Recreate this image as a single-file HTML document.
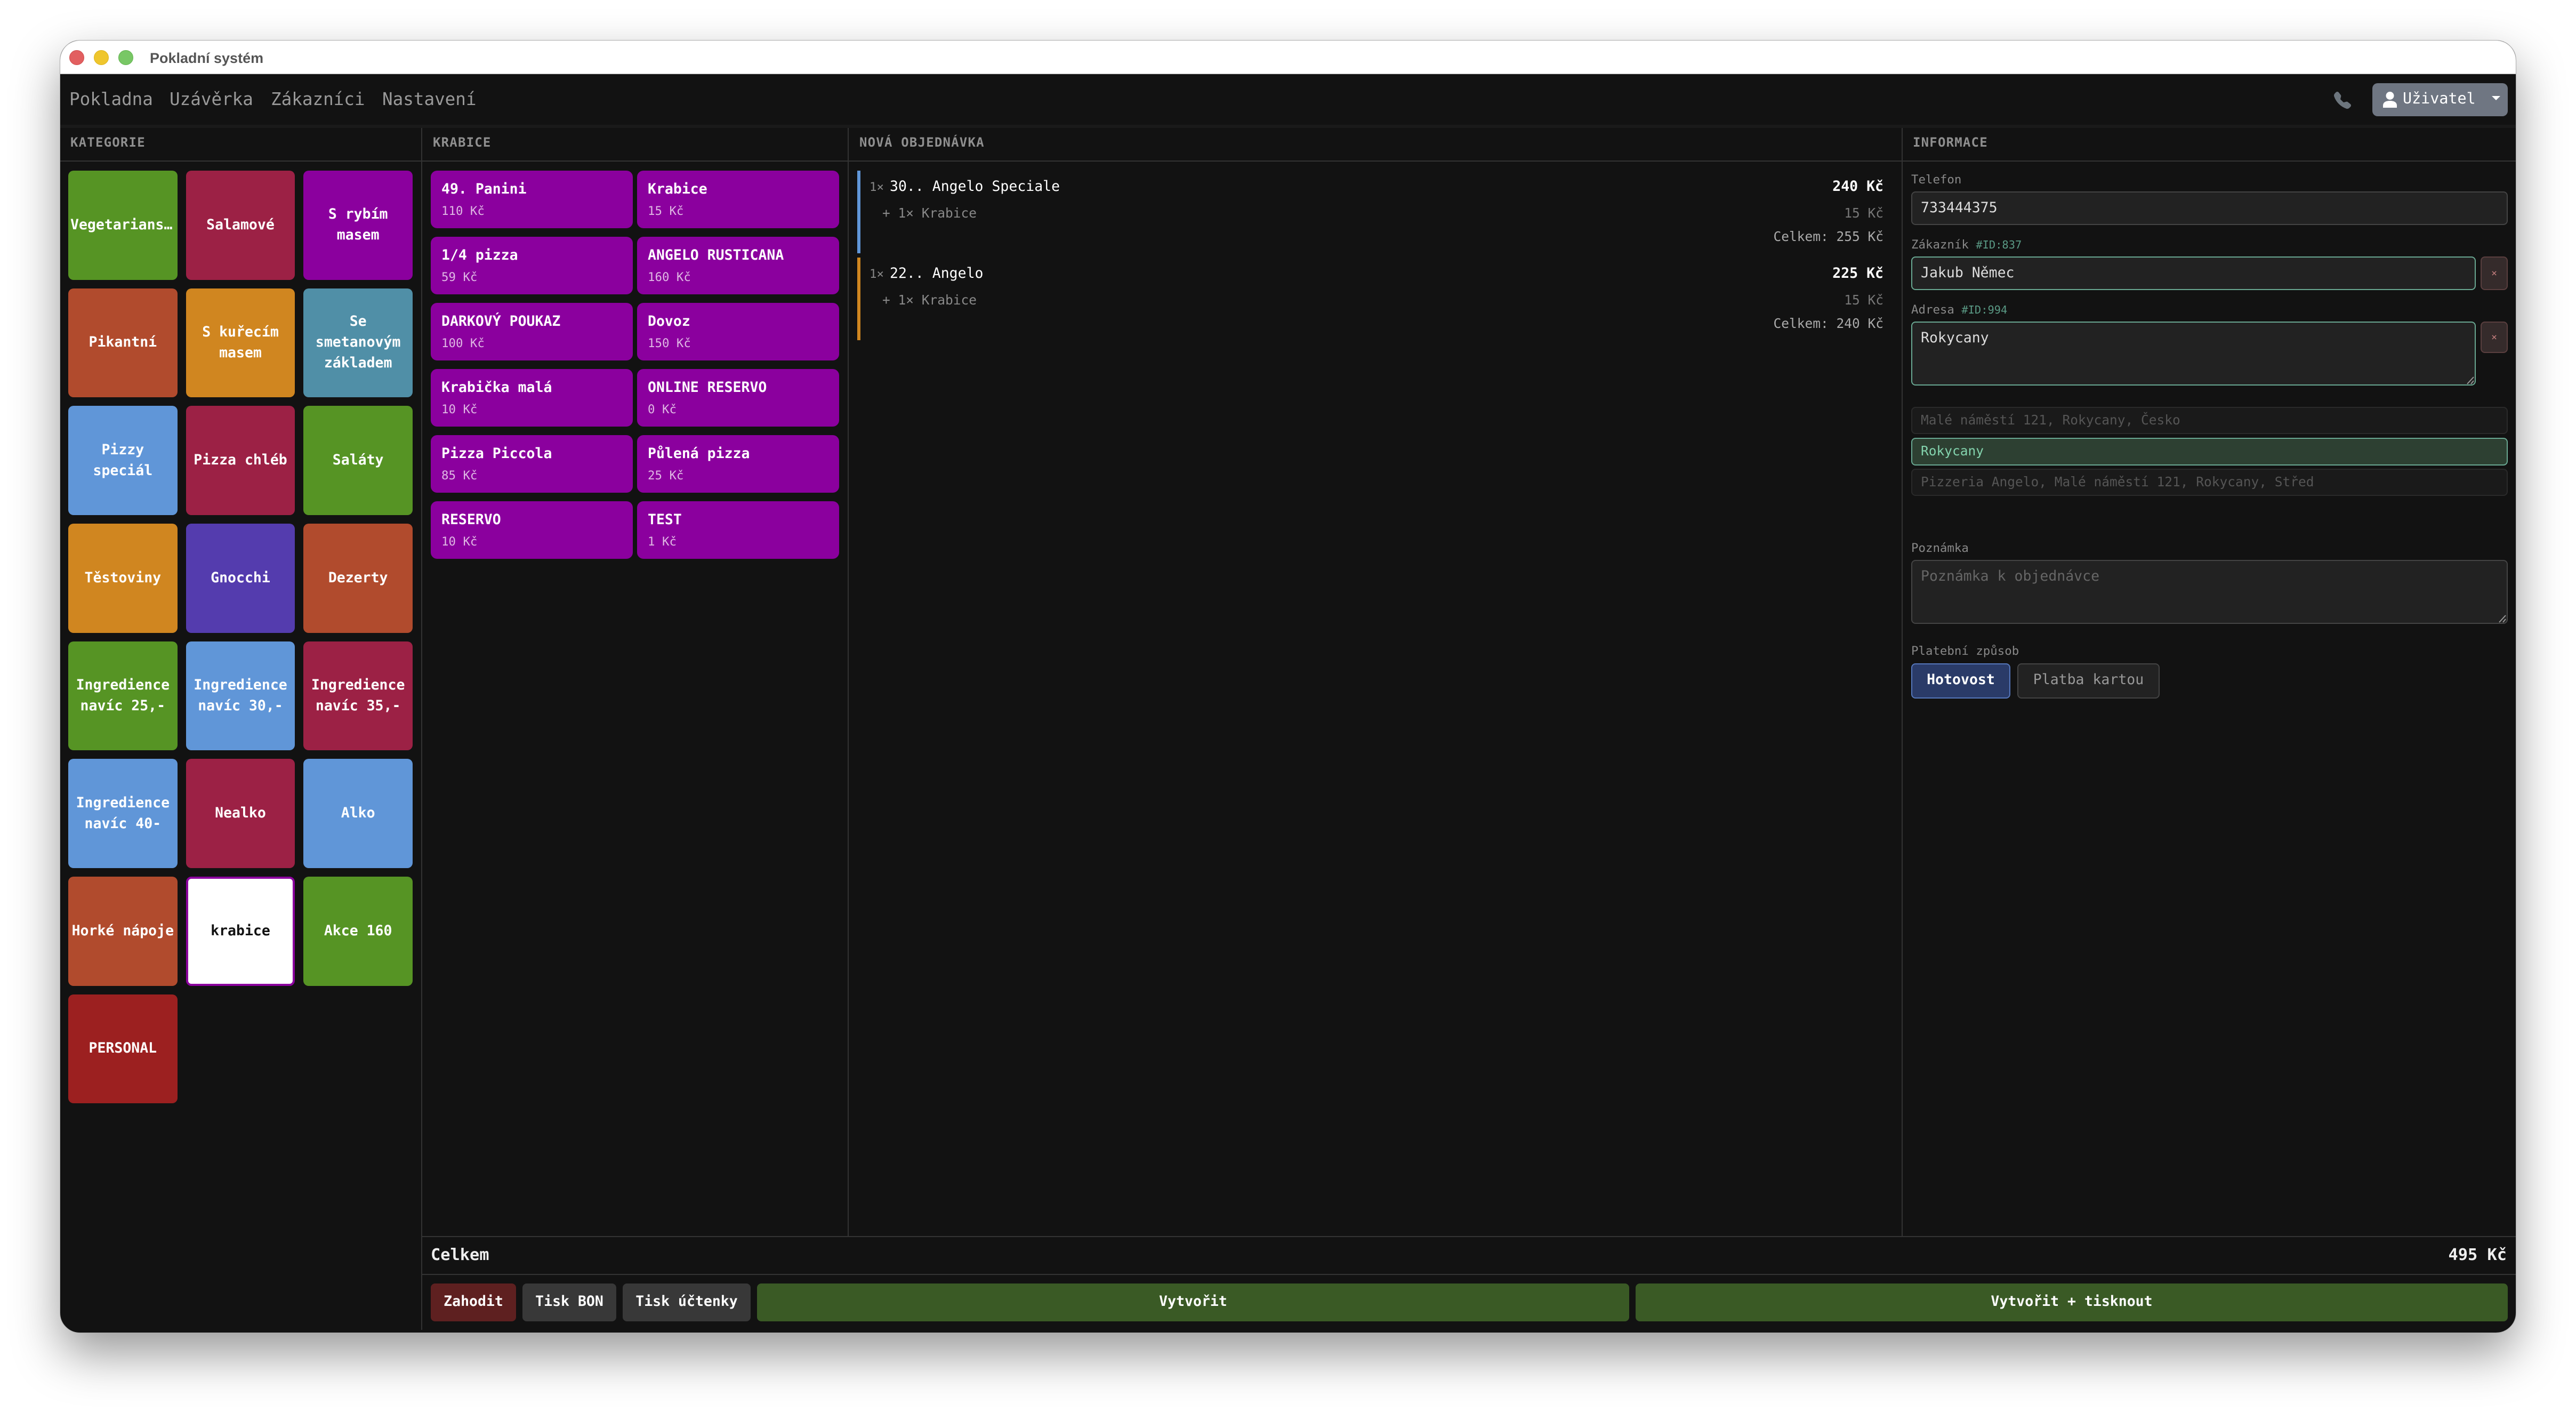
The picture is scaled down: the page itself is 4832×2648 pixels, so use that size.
<!DOCTYPE html>
<html lang="cs"><head><meta charset="utf-8"><title>Pokladní systém</title>
<style>
html,body{margin:0;padding:0;background:#fff;width:4832px;height:2648px;overflow:hidden}
*{box-sizing:border-box}
body{position:relative;font-family:"DejaVu Sans Mono","Liberation Mono",monospace;color:#fff}
.a{position:absolute}
.t{position:absolute;white-space:pre;line-height:40px;height:40px}
.win{position:absolute;left:112px;top:75px;width:4608px;height:2425px;border-radius:38px;box-shadow:0 40px 90px rgba(0,0,0,.4)}
.clip{position:absolute;inset:0;border-radius:38px;overflow:hidden;background:#121212;border:1px solid #aaa}
.cat{position:absolute;width:204.67px;height:204.67px;border-radius:10px;display:flex;align-items:center;justify-content:center;text-align:center;font-size:26.5px;font-weight:700;line-height:39px;padding:0 4px 2px;overflow:hidden}
.pr{position:absolute;width:379px;height:108px;background:#8b009e;border-radius:12px}
.pr b{position:absolute;left:20px;top:15px;font-size:26.5px;line-height:40px;white-space:pre}
.pr i{position:absolute;left:20px;top:59px;font-style:normal;font-size:22.4px;line-height:34px;color:rgba(255,255,255,.72);white-space:pre}
.h{font-size:24px;font-weight:700;letter-spacing:1.2px;color:#8f8f8f}
.line{position:absolute;background:#333}
.lb{font-size:22.4px;color:#888}
.id{font-size:20.4px;color:#5a9a85}
.in{position:absolute;background:#222;border:2px solid #444;border-radius:8px;font-size:26.5px;color:#ddd;padding-left:16px;white-space:pre}
.ok{border-color:#69a892}
.x{position:absolute;background:#352b2b;border:2px solid #5a3f3f;border-radius:8px;color:#c57f7f;font-size:18px;display:flex;align-items:center;justify-content:center}
.sg{position:absolute;left:3585px;width:1119px;height:51px;background:#1a1a1a;border:2px solid #2a2a2a;border-radius:8px;font-size:24.5px;color:#555;padding-left:16px;line-height:45px;white-space:pre}
.btn{position:absolute;top:2407px;height:71px;border-radius:8px;font-size:26.5px;font-weight:700;display:flex;align-items:center;justify-content:center;padding-bottom:4px}
.nav{font-size:32.6px;color:#999}
</style></head><body>
<div class="win"></div>
<div class="clip" style="left:112px;top:75px;width:4608px;height:2425px;position:absolute"></div>

<div class="a" style="left:113px;top:76px;width:4606px;height:61px;background:#fff;border-radius:37px 37px 0 0"></div>
<div class="a" style="left:113px;top:137px;width:4606px;height:2px;background:#e5e5e5"></div>
<div class="a" style="left:130px;top:94px;width:28px;height:28px;border-radius:50%;background:#e25f60;border:1px solid #cf4c4d"></div>
<div class="a" style="left:176px;top:94px;width:28px;height:28px;border-radius:50%;background:#efc62d;border:1px solid #dcb41e"></div>
<div class="a" style="left:222px;top:94px;width:28px;height:28px;border-radius:50%;background:#78c765;border:1px solid #62b34f"></div>
<div class="t" style="left:281px;top:89px;font-family:'Liberation Sans',sans-serif;font-size:27px;font-weight:700;color:#555">Pokladní systém</div>

<div class="t nav" style="left:130px;top:166px">Pokladna</div>
<div class="t nav" style="left:318px;top:166px">Uzávěrka</div>
<div class="t nav" style="left:508px;top:166px">Zákazníci</div>
<div class="t nav" style="left:717px;top:166px">Nastavení</div>

<svg class="a" style="left:4378px;top:172px" width="32" height="32" viewBox="0 0 16 16"><path fill="#6c757d" fill-rule="evenodd" d="M1.885.511a1.745 1.745 0 0 1 2.61.163L6.29 2.98c.329.423.445.974.315 1.494l-.547 2.19a.678.678 0 0 0 .178.643l2.457 2.457a.678.678 0 0 0 .644.178l2.189-.547a1.745 1.745 0 0 1 1.494.315l2.306 1.794c.829.645.905 1.87.163 2.611l-1.034 1.034c-.74.74-1.846 1.065-2.877.702a18.634 18.634 0 0 1-7.01-4.42 18.634 18.634 0 0 1-4.42-7.009c-.362-1.03-.037-2.137.703-2.877L1.885.511z"/></svg>
<div class="a" style="left:4450px;top:156px;width:254px;height:62px;background:#6f7682;border-radius:10px"></div>
<svg class="a" style="left:4470px;top:172px" width="26" height="30" viewBox="0 0 26 30"><circle cx="13" cy="7.5" r="7.5" fill="#fff"/><path fill="#fff" d="M0 30v-4C0 20 5 17 13 17s13 3 13 9v4z"/></svg>
<div class="t" style="left:4507px;top:165px;font-size:28.4px;color:#fff">Uživatel</div>
<svg class="a" style="left:4674px;top:180px" width="16" height="8"><path d="M0 0h16L8 8z" fill="#fff"/></svg>

<div class="a" style="left:113px;top:234px;width:4606px;height:6px;background:#1a1a1a"></div>
<div class="line" style="left:113px;top:301px;width:4606px;height:2px"></div>
<div class="line" style="left:790px;top:240px;width:2px;height:2254px"></div>
<div class="line" style="left:1590px;top:240px;width:2px;height:2079px"></div>
<div class="line" style="left:3567px;top:240px;width:2px;height:2079px"></div>
<div class="line" style="left:791px;top:2318px;width:3928px;height:2px"></div>
<div class="line" style="left:791px;top:2389px;width:3928px;height:2px"></div>

<div class="t h" style="left:132px;top:247px">KATEGORIE</div>
<div class="t h" style="left:812px;top:247px">KRABICE</div>
<div class="t h" style="left:1612px;top:247px">NOVÁ OBJEDNÁVKA</div>
<div class="t h" style="left:3588px;top:247px">INFORMACE</div>

<div class="cat" style="left:128px;top:320px;background:#569424;padding-left:4px;padding-right:0;justify-content:flex-start"><span style="white-space:nowrap">Vegetarians…</span></div>
<div class="cat" style="left:348.67px;top:320px;background:#9c2145">Salamové</div>
<div class="cat" style="left:569.33px;top:320px;background:#8b009e">S rybím<br>masem</div>
<div class="cat" style="left:128px;top:540.67px;background:#b14b2d">Pikantní</div>
<div class="cat" style="left:348.67px;top:540.67px;background:#d08620">S kuřecím<br>masem</div>
<div class="cat" style="left:569.33px;top:540.67px;background:#508fa7">Se<br>smetanovým<br>základem</div>
<div class="cat" style="left:128px;top:761.33px;background:#6096d8">Pizzy<br>speciál</div>
<div class="cat" style="left:348.67px;top:761.33px;background:#9c2145">Pizza chléb</div>
<div class="cat" style="left:569.33px;top:761.33px;background:#569424">Saláty</div>
<div class="cat" style="left:128px;top:982px;background:#d08620">Těstoviny</div>
<div class="cat" style="left:348.67px;top:982px;background:#543cae">Gnocchi</div>
<div class="cat" style="left:569.33px;top:982px;background:#b14b2d">Dezerty</div>
<div class="cat" style="left:128px;top:1202.67px;background:#569424">Ingredience<br>navíc 25,-</div>
<div class="cat" style="left:348.67px;top:1202.67px;background:#6096d8">Ingredience<br>navíc 30,-</div>
<div class="cat" style="left:569.33px;top:1202.67px;background:#9c2145">Ingredience<br>navíc 35,-</div>
<div class="cat" style="left:128px;top:1423.33px;background:#6096d8">Ingredience<br>navíc 40-</div>
<div class="cat" style="left:348.67px;top:1423.33px;background:#9c2145">Nealko</div>
<div class="cat" style="left:569.33px;top:1423.33px;background:#6096d8">Alko</div>
<div class="cat" style="left:128px;top:1644px;background:#b14b2d;padding:0 0 2px"><span style="white-space:nowrap">Horké nápoje</span></div>
<div class="cat" style="left:348.67px;top:1644px;background:#fff;color:#121212;border:4px solid #8b009e">krabice</div>
<div class="cat" style="left:569.33px;top:1644px;background:#569424">Akce 160</div>
<div class="cat" style="left:128px;top:1864.67px;background:#9c2020">PERSONAL</div>

<div class="pr" style="left:808px;top:320px"><b>49. Panini</b><i>110 Kč</i></div>
<div class="pr" style="left:1195px;top:320px"><b>Krabice</b><i>15 Kč</i></div>
<div class="pr" style="left:808px;top:444px"><b>1/4 pizza</b><i>59 Kč</i></div>
<div class="pr" style="left:1195px;top:444px"><b>ANGELO RUSTICANA</b><i>160 Kč</i></div>
<div class="pr" style="left:808px;top:568px"><b>DARKOVÝ POUKAZ</b><i>100 Kč</i></div>
<div class="pr" style="left:1195px;top:568px"><b>Dovoz</b><i>150 Kč</i></div>
<div class="pr" style="left:808px;top:692px"><b>Krabička malá</b><i>10 Kč</i></div>
<div class="pr" style="left:1195px;top:692px"><b>ONLINE RESERVO</b><i>0 Kč</i></div>
<div class="pr" style="left:808px;top:816px"><b>Pizza Piccola</b><i>85 Kč</i></div>
<div class="pr" style="left:1195px;top:816px"><b>Půlená pizza</b><i>25 Kč</i></div>
<div class="pr" style="left:808px;top:940px"><b>RESERVO</b><i>10 Kč</i></div>
<div class="pr" style="left:1195px;top:940px"><b>TEST</b><i>1 Kč</i></div>

<div class="a" style="left:1608px;top:320px;width:6px;height:155px;background:#6096d8"></div>
<div class="t" style="left:1631px;top:331px;font-size:22.4px;color:#888">1×</div>
<div class="t" style="left:1669px;top:330px;font-size:26.5px">30.. Angelo Speciale</div>
<div class="t" style="left:1655px;top:380px;font-size:24.5px;color:#888">+ 1× Krabice</div>
<div class="t" style="right:1299px;top:330px;font-size:26.5px;font-weight:700">240 Kč</div>
<div class="t" style="right:1299px;top:380px;font-size:24.5px;color:#777">15 Kč</div>
<div class="t" style="right:1299px;top:424px;font-size:24.5px;color:#aaa">Celkem: 255 Kč</div>

<div class="a" style="left:1608px;top:483px;width:6px;height:155px;background:#d08620"></div>
<div class="t" style="left:1631px;top:494px;font-size:22.4px;color:#888">1×</div>
<div class="t" style="left:1669px;top:493px;font-size:26.5px">22.. Angelo</div>
<div class="t" style="left:1655px;top:543px;font-size:24.5px;color:#888">+ 1× Krabice</div>
<div class="t" style="right:1299px;top:493px;font-size:26.5px;font-weight:700">225 Kč</div>
<div class="t" style="right:1299px;top:543px;font-size:24.5px;color:#777">15 Kč</div>
<div class="t" style="right:1299px;top:587px;font-size:24.5px;color:#aaa">Celkem: 240 Kč</div>

<div class="t lb" style="left:3585px;top:317px">Telefon</div>
<div class="in" style="left:3585px;top:359px;width:1119px;height:63px;line-height:57px">733444375</div>
<div class="t lb" style="left:3585px;top:439px">Zákazník <span class="id">#ID:837</span></div>
<div class="in ok" style="left:3585px;top:481px;width:1059px;height:63px;line-height:57px">Jakub Němec</div>
<div class="x" style="left:4653px;top:481px;width:51px;height:63px">×</div>
<div class="t lb" style="left:3585px;top:561px">Adresa <span class="id">#ID:994</span></div>
<div class="in ok" style="left:3585px;top:603px;width:1059px;height:120px;line-height:57px">Rokycany</div>
<div class="x" style="left:4653px;top:603px;width:51px;height:59px">×</div>
<svg class="a" style="left:4626px;top:705px" width="16" height="16"><path d="M2 15L14 2M9 15L14 9" stroke="#999" stroke-width="2" fill="none"/></svg>

<div class="sg" style="top:763px">Malé náměstí 121, Rokycany, Česko</div>
<div class="sg" style="top:821px;height:52px;background:#2d4032;border-color:#69a892;color:#83d3ad">Rokycany</div>
<div class="sg" style="top:879px">Pizzeria Angelo, Malé náměstí 121, Rokycany, Střed</div>

<div class="t lb" style="left:3585px;top:1008px">Poznámka</div>
<div class="in" style="left:3585px;top:1050px;width:1119px;height:120px;line-height:57px;color:#666">Poznámka k objednávce</div>
<svg class="a" style="left:4686px;top:1152px" width="16" height="16"><path d="M2 15L14 2M9 15L14 9" stroke="#999" stroke-width="2" fill="none"/></svg>
<div class="t lb" style="left:3585px;top:1201px">Platební způsob</div>
<div class="a" style="left:3585px;top:1244px;width:186px;height:66px;background:#2a3b68;border:2px solid #5577bb;border-radius:8px;font-size:26.5px;font-weight:700;text-align:center;line-height:58px">Hotovost</div>
<div class="a" style="left:3784px;top:1244px;width:267px;height:66px;background:#222;border:2px solid #444;border-radius:8px;font-size:26.5px;color:#999;text-align:center;line-height:58px">Platba kartou</div>

<div class="t" style="left:808px;top:2334px;font-size:30.3px;font-weight:700;color:#eee">Celkem</div>
<div class="t" style="right:130px;top:2334px;font-size:30.3px;font-weight:700;color:#eee">495 Kč</div>

<div class="btn" style="left:808px;width:160px;background:#5e2020">Zahodit</div>
<div class="btn" style="left:980px;width:176px;background:#383838">Tisk BON</div>
<div class="btn" style="left:1168px;width:240px;background:#383838">Tisk účtenky</div>
<div class="btn" style="left:1420px;width:1636px;background:#3a5a25">Vytvořit</div>
<div class="btn" style="left:3068px;width:1636px;background:#3a5a25">Vytvořit + tisknout</div>
</body></html>
